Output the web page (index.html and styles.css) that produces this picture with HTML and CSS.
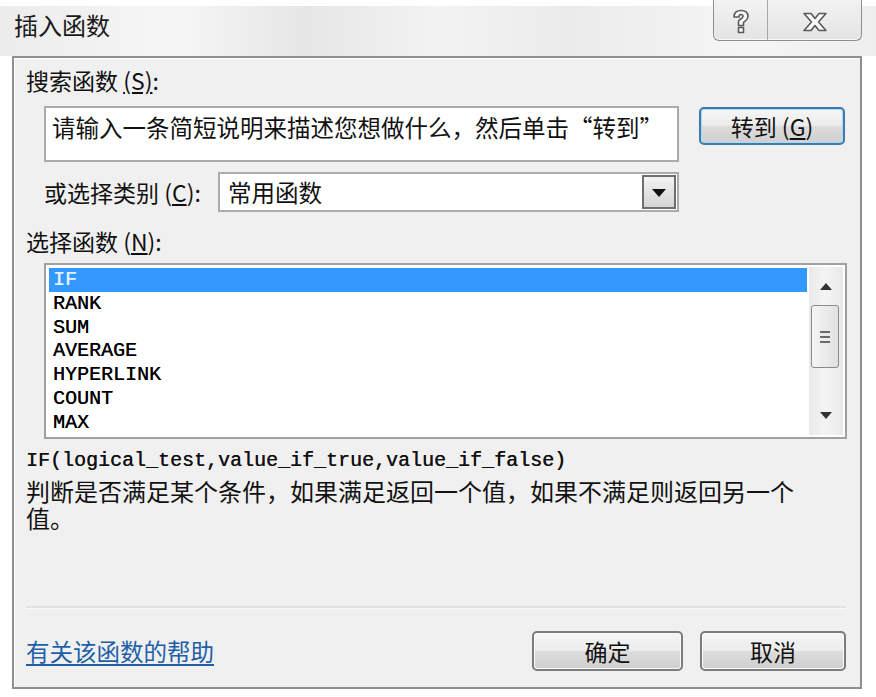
FILE: index.html
```html
<!DOCTYPE html>
<html lang="zh-CN">
<head>
    <meta charset="UTF-8">
    <meta name="viewport" content="width=device-width, initial-scale=1.0">
    <title>插入函数</title>
    <link rel="stylesheet" href="styles.css">
</head>
<body>
    <div class="dialog">
        <header class="titlebar">
            <h1>插入函数</h1>
            <div class="caption-buttons">
                <span class="caption-btn help">
                    <svg width="18" height="26" viewBox="0 0 18 26">
                        <path d="M2 8 C2 3 5 1.5 9 1.5 C13 1.5 16 3.5 16 7.5 C16 11 13 12 11.5 13.5 L11.5 16.5 L6.5 16.5 L6.5 12.5 C6.5 10.5 11 9.5 11 7.5 C11 6 10 5.5 9 5.5 C7.8 5.5 7 6.3 7 8 Z M6.5 18.5 L11.5 18.5 L11.5 23.5 L6.5 23.5 Z" fill="#fafafa" stroke="#5a5a5a" stroke-width="1.6" stroke-linejoin="round"/>
                    </svg>
                </span>
                <span class="caption-btn close">
                    <svg width="26" height="20" viewBox="0 0 26 20">
                        <path d="M2 1.5 L9 1.5 L13 6.5 L17 1.5 L24 1.5 L16.5 10 L24 18.5 L17 18.5 L13 13.5 L9 18.5 L2 18.5 L9.5 10 Z" fill="#fafafa" stroke="#5a5a5a" stroke-width="1.6" stroke-linejoin="round"/>
                    </svg>
                </span>
            </div>
        </header>

        <main class="panel">
            <div class="label">搜索函数 <u>(S)</u>:</div>
            <div class="search-row">
                <div class="textbox">请输入一条简短说明来描述您想做什么，然后单击“转到”</div>
                <button class="btn btn-default">转到 (<u>G</u>)</button>
            </div>

            <div class="category-row">
                <span class="category-label">或选择类别 (<u>C</u>):</span>
                <div class="select">
                    <span class="select-value">常用函数</span>
                    <span class="select-arrow"></span>
                </div>
            </div>

            <div class="label list-label">选择函数 (<u>N</u>):</div>
            <div class="listbox">
                <ul class="list-items">
                    <li class="selected">IF</li>
                    <li>RANK</li>
                    <li>SUM</li>
                    <li>AVERAGE</li>
                    <li>HYPERLINK</li>
                    <li>COUNT</li>
                    <li>MAX</li>
                </ul>
                <div class="scrollbar">
                    <span class="arrow-up"></span>
                    <span class="thumb"><i></i><i></i><i></i></span>
                    <span class="arrow-down"></span>
                </div>
            </div>

            <div class="syntax">IF(logical_test,value_if_true,value_if_false)</div>
            <p class="description">判断是否满足某个条件，如果满足返回一个值，如果不满足则返回另一个值。</p>

            <footer class="footer">
                <a class="help-link" href="#">有关该函数的帮助</a>
                <div class="footer-buttons">
                    <button class="btn">确定</button>
                    <button class="btn">取消</button>
                </div>
            </footer>
        </main>
    </div>
</body>
</html>
```

FILE: styles.css
```css
* {
    box-sizing: border-box;
}

body {
    margin: 0;
    background: #ffffff;
    font-family: "Noto Sans CJK SC", "Noto Sans", sans-serif;
    color: #111;
}

u {
    text-decoration: underline;
    text-underline-offset: 2px;
}

.dialog {
    width: 876px;
    height: 697px;
    padding-top: 6px;
    background: linear-gradient(180deg, #ffffff 0, #ffffff 6px, transparent 6px),
        linear-gradient(90deg, #ececec 0%, #f6f6f6 20%, #e6e6e6 35%, #f3f3f3 50%, #ebebeb 65%, #f5f5f5 85%, #eeeeee 100%);
    background-size: 100% 100%, 100% 56px;
    background-repeat: no-repeat;
}

/* title bar */
.titlebar {
    position: relative;
    height: 50px;
}

.titlebar h1 {
    margin: 0;
    padding: 2px 0 0 14px;
    font-size: 24px;
    font-weight: normal;
    line-height: 34px;
    color: #1a1a1a;
}

.caption-buttons {
    position: absolute;
    top: -6px;
    right: 14px;
    display: flex;
    height: 41px;
    border: 1.5px solid #8e8e8e;
    border-top: none;
    border-radius: 0 0 6px 6px;
    background: linear-gradient(180deg, #f2f2f2, #e4e4e4);
    box-shadow: inset 0 -1px 0 #fbfbfb;
}

.caption-btn {
    display: flex;
    align-items: center;
    justify-content: center;
    padding-top: 4px;
}

.caption-btn.help {
    width: 54px;
    border-right: 1px solid #a8a8a8;
}

.caption-btn.close {
    width: 93px;
}

/* panel */
.panel {
    display: flex;
    flex-direction: column;
    width: 850px;
    height: 633px;
    margin-left: 12px;
    padding: 8px 14px 16px 12px;
    background: #f0f0f0;
    border: 2px solid #8f8f8f;
    box-shadow: inset 1px 1px 0 #ffffff;
}

.label {
    font-size: 23px;
    line-height: 28px;
}

.search-row {
    display: flex;
    align-items: flex-start;
    margin-top: 12px;
    padding-left: 18px;
}

.textbox {
    width: 635px;
    height: 56px;
    padding: 4px 6px;
    background: #ffffff;
    border: 2px solid #ababab;
    font-size: 23.5px;
    line-height: 30px;
    white-space: nowrap;
    overflow: hidden;
}

.btn {
    width: 146px;
    height: 40px;
    padding: 0;
    font-family: inherit;
    font-size: 23px;
    color: #111;
    border: 2px solid #7c7c7c;
    border-radius: 5px;
    background: linear-gradient(180deg, #f6f6f6 0%, #ececec 48%, #dcdcdc 52%, #cfcfcf 100%);
    box-shadow: inset 0 0 0 1px #fbfbfb;
}

.btn-default {
    height: 38px;
    margin-left: 20px;
    margin-top: 1px;
    border-color: #3d7bad;
    box-shadow: inset 0 0 0 1px #a8dcf3;
}

.category-row {
    display: flex;
    align-items: center;
    margin-top: 10px;
    padding-left: 18px;
}

.category-label {
    width: 174px;
    font-size: 23px;
}

.select {
    display: flex;
    align-items: center;
    width: 461px;
    height: 40px;
    padding: 1px;
    background: #ffffff;
    border: 2px solid #ababab;
}

.select-value {
    flex: 1;
    padding-left: 7px;
    font-size: 23.5px;
}

.select-arrow {
    position: relative;
    width: 34px;
    height: 100%;
    border: 2px solid #6e6e6e;
    background: linear-gradient(180deg, #f3f3f3, #d4d4d4);
}

.select-arrow::after {
    content: "";
    position: absolute;
    left: 8px;
    top: 12px;
    border-left: 7px solid transparent;
    border-right: 7px solid transparent;
    border-top: 8px solid #111;
}

.list-label {
    margin-top: 15px;
}

/* function list */
.listbox {
    display: flex;
    width: 803px;
    height: 176px;
    margin-top: 8px;
    margin-left: 18px;
    padding: 2px;
    background: #ffffff;
    border: 2px solid #a0a0a0;
}

.list-items {
    flex: 1;
    margin: 0;
    padding: 1px 2px 0 1px;
    list-style: none;
    font-family: "Liberation Mono", "DejaVu Sans Mono", monospace;
    font-size: 20px;
    line-height: 23.8px;
}

.list-items li {
    padding-left: 4px;
    color: #000;
    text-shadow: 0.3px 0 0 #000;
}

.list-items li.selected {
    background: #3399ff;
    color: #e3f1ff;
    text-shadow: 0.3px 0 0 #e3f1ff;
}

.scrollbar {
    position: relative;
    width: 34px;
    background: linear-gradient(90deg, #e9e9e9, #f4f4f4 50%, #e9e9e9);
}

.arrow-up,
.arrow-down {
    position: absolute;
    left: 11px;
    border-left: 6px solid transparent;
    border-right: 6px solid transparent;
}

.arrow-up {
    top: 16px;
    border-bottom: 7px solid #333;
}

.arrow-down {
    bottom: 16px;
    border-top: 7px solid #333;
}

.thumb {
    position: absolute;
    top: 38px;
    left: 2px;
    display: flex;
    flex-direction: column;
    align-items: center;
    justify-content: center;
    gap: 3px;
    width: 28px;
    height: 63px;
    border: 1.5px solid #8a8a8a;
    border-radius: 3px;
    background: linear-gradient(90deg, #f5f5f5, #e1e1e1);
}

.thumb i {
    width: 10px;
    height: 2px;
    background: #6a6a6a;
}

.syntax {
    margin-top: 11px;
    font-family: "Liberation Mono", "DejaVu Sans Mono", monospace;
    font-size: 20px;
    line-height: 22px;
    text-shadow: 0.3px 0 0 #111;
}

.description {
    width: 800px;
    margin: 5px 0 0;
    font-size: 24px;
    line-height: 27px;
}

.footer {
    display: flex;
    align-items: center;
    justify-content: space-between;
    margin-top: auto;
    padding-top: 23px;
    border-top: 2px solid #e0e0e0;
    box-shadow: inset 0 1px 0 #fafafa;
}

.help-link {
    font-size: 23.5px;
    color: #1f5fa8;
    text-decoration: underline;
    text-underline-offset: 3px;
}

.footer-buttons {
    display: flex;
    gap: 17px;
}

.footer-buttons .btn:first-child {
    width: 151px;
}
```
